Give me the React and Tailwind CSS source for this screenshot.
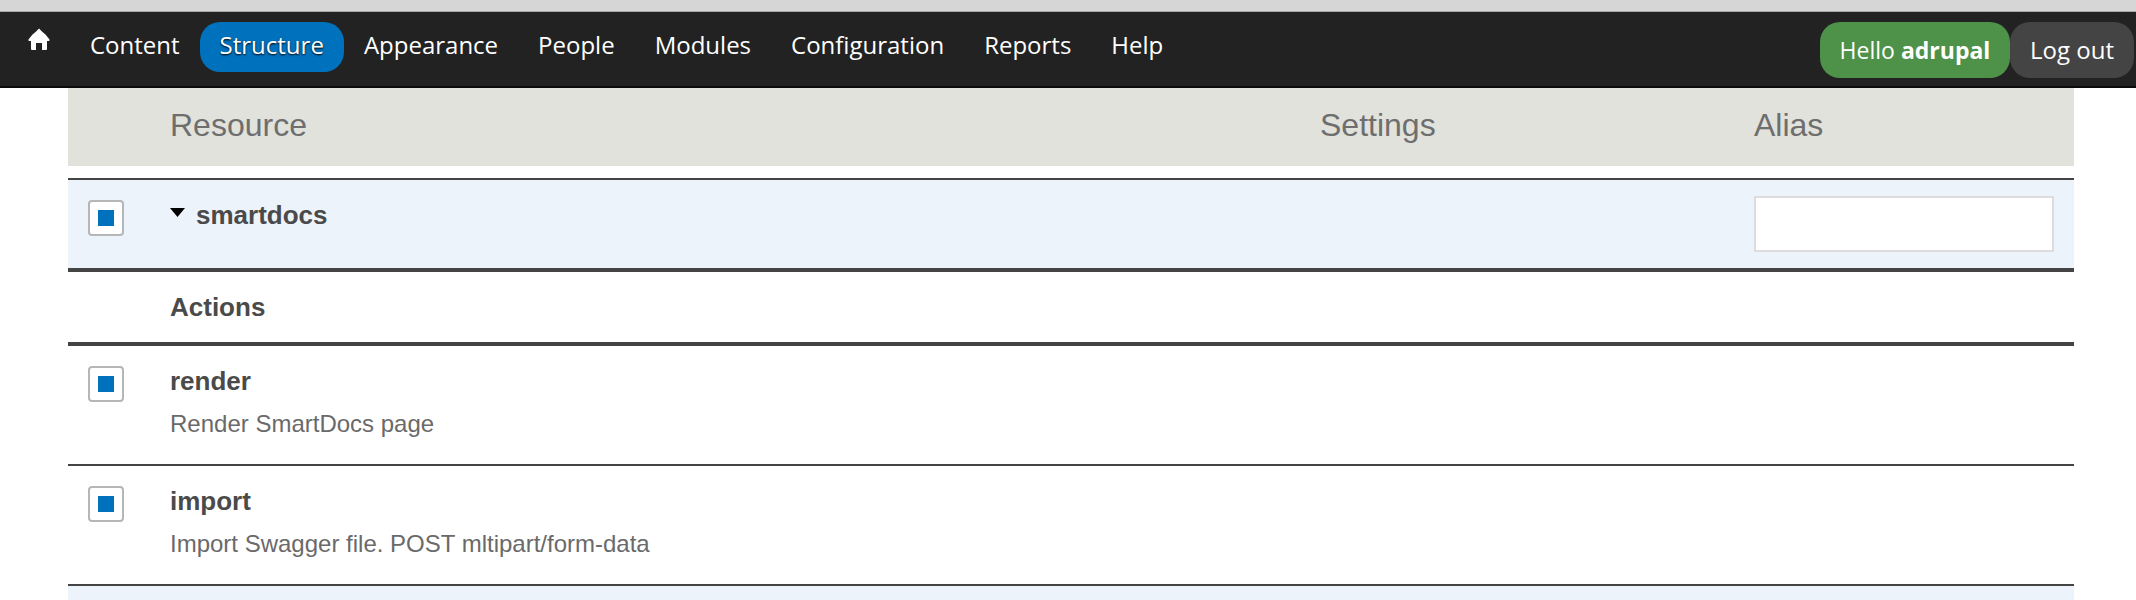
const menu = [
  { label: "Content" },
  { label: "Structure", active: true },
  { label: "Appearance" },
  { label: "People" },
  { label: "Modules" },
  { label: "Configuration" },
  { label: "Reports" },
  { label: "Help" },
];

const actions = [
  { name: "render", description: "Render SmartDocs page" },
  { name: "import", description: "Import Swagger file. POST mltipart/form-data" },
];

function Checkbox({ className = "" }) {
  return (
    <div className={`flex h-9 w-9 items-center justify-center rounded-[4px] border-2 border-[#b4b6b8] bg-white ${className}`}>
      <div className="h-4 w-4 bg-[#0071bc]" />
    </div>
  );
}

function Toolbar() {
  return (
    <div className="flex h-[76px] items-start border-b-2 border-[#0a0a0a] bg-[#222222] pt-[10px] font-['Open_Sans',sans-serif] text-[24px] text-white">
      <a className="flex h-[50px] w-[70px] items-start justify-center pl-[8px] pt-[6px]">
        <svg width="22" height="22" viewBox="0 0 22 22" fill="#ffffff">
          <path d="M11 0.5 L14.5 4 L17.5 6.5 L21.5 11.5 Q22 13 20.5 13 L19 13 L19 21 Q19 22 18 22 L14 22 L14 15 L8 15 L8 22 L4 22 Q3 22 3 21 L3 13 L1.5 13 Q0 13 0.5 11.5 L4.5 6.5 L7.5 4 Z" />
        </svg>
      </a>
      {menu.map((item) => (
        <a
          key={item.label}
          className={`flex h-[50px] items-center rounded-[20px] px-5 pb-[4px] leading-none ${
            item.active ? "bg-[#0071bc] [text-shadow:0_1px_2px_#000]" : ""
          }`}
        >
          {item.label}
        </a>
      ))}
      <div className="ml-auto mr-[2px] flex">
        <a className="flex h-14 w-[190px] items-center justify-center rounded-[20px] bg-[#4e9148] text-[23px]">
          Hello&nbsp;<b className="font-bold">adrupal</b>
        </a>
        <a className="flex h-14 w-[124px] items-center justify-center rounded-[20px] bg-[#444444]">
          Log out
        </a>
      </div>
    </div>
  );
}

export default function App() {
  return (
    <div className="h-[600px] overflow-hidden bg-white font-['Liberation_Sans',sans-serif] text-[#4a4a4a]">
      <div className="h-3 border-b border-[#a8a8a8] bg-[#d6d6d6]" />
      <Toolbar />

      <div className="mx-[68px] w-[2006px]">
        <div className="grid h-[78px] grid-cols-[102px_1150px_434px_1fr] items-center bg-[#e1e2dc] pb-[4px] text-[32px] text-[#6e6e6e]">
          <div />
          <div>Resource</div>
          <div>Settings</div>
          <div>Alias</div>
        </div>

        <div className="mt-3 grid h-[94px] grid-cols-[102px_1150px_434px_1fr] border-t-2 border-b-4 border-t-[#444444] border-b-[#444444] bg-[#ecf3fa]">
          <div className="pl-5 pt-5">
            <Checkbox />
          </div>
          <div className="flex items-start pt-[18px]">
            <svg className="mt-[10px] mr-[11px]" width="15" height="9" viewBox="0 0 15 9" fill="#000000">
              <path d="M0 0 L15 0 L7.5 9 Z" />
            </svg>
            <span className="text-[26px] font-bold leading-[34px]">smartdocs</span>
          </div>
          <div />
          <div className="pt-[16px]">
            <input className="block h-[56px] w-[300px] border-2 border-[#dcdcdc] bg-white" />
          </div>
        </div>

        <div className="flex h-[74px] items-center border-b-4 border-[#444444] pl-[102px] text-[26px] font-bold">
          Actions
        </div>

        {actions.map((action) => (
          <div key={action.name} className="flex h-[120px] border-b-2 border-[#444444]">
            <div className="w-[102px] pl-5 pt-5">
              <Checkbox />
            </div>
            <div className="pt-[18px]">
              <div className="text-[26px] font-bold leading-[34px]">{action.name}</div>
              <div className="mt-[10px] text-[24px] leading-[32px] text-[#6a6a6a]">{action.description}</div>
            </div>
          </div>
        ))}

        <div className="h-5 bg-[#ecf3fa]" />
      </div>
    </div>
  );
}
